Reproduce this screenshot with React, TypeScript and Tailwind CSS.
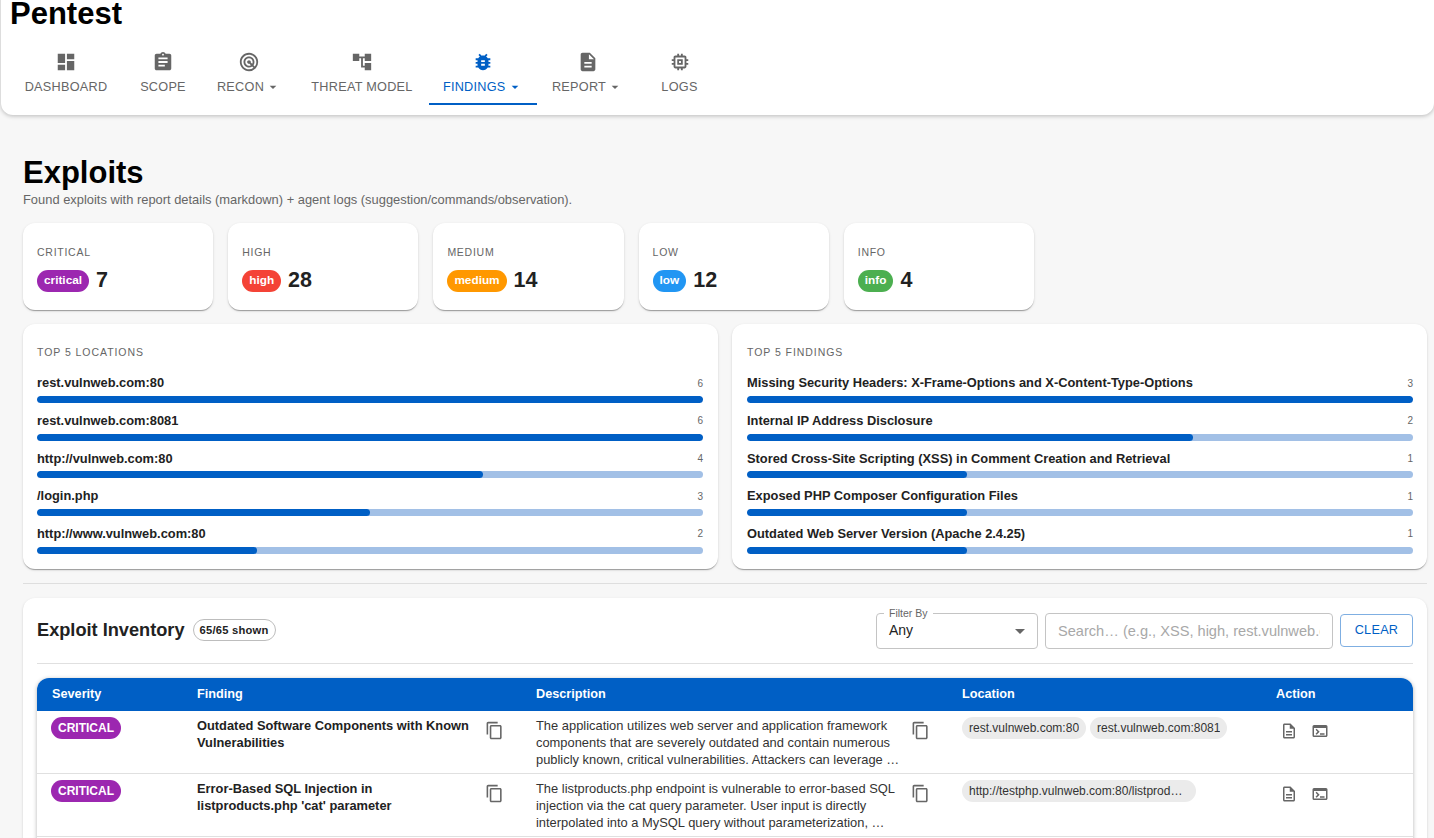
import { useState } from 'react'
import {
  MdAccountTree,
  MdArrowDropDown,
  MdAssignment,
  MdBugReport,
  MdContentCopy,
  MdDashboard,
  MdDescription,
  MdMemory,
  MdOutlineDescription,
  MdOutlineTerminal,
  MdRadar,
} from 'react-icons/md'
import type { IconType } from 'react-icons'

type NavItem = { label: string; icon: IconType; caret?: boolean; active?: boolean; width: string }

const navItems: NavItem[] = [
  { label: 'DASHBOARD', icon: MdDashboard, width: 'w-[114px]' },
  { label: 'SCOPE', icon: MdAssignment, width: 'w-[80px]' },
  { label: 'RECON', icon: MdRadar, caret: true, width: 'w-[92px]' },
  { label: 'THREAT MODEL', icon: MdAccountTree, width: 'w-[134px]' },
  { label: 'FINDINGS', icon: MdBugReport, caret: true, active: true, width: 'w-[107.5px]' },
  { label: 'REPORT', icon: MdDescription, caret: true, width: 'w-[102px]' },
  { label: 'LOGS', icon: MdMemory, width: 'w-[82px]' },
]

const severities = [
  { title: 'CRITICAL', label: 'critical', count: 7, color: 'bg-[#9c27b0]' },
  { title: 'HIGH', label: 'high', count: 28, color: 'bg-[#f44336]' },
  { title: 'MEDIUM', label: 'medium', count: 14, color: 'bg-[#ff9800]' },
  { title: 'LOW', label: 'low', count: 12, color: 'bg-[#2196f3]' },
  { title: 'INFO', label: 'info', count: 4, color: 'bg-[#4caf50]' },
]

const topLocations = [
  { name: 'rest.vulnweb.com:80', count: 6, pct: 100 },
  { name: 'rest.vulnweb.com:8081', count: 6, pct: 100 },
  { name: 'http://vulnweb.com:80', count: 4, pct: 67 },
  { name: '/login.php', count: 3, pct: 50 },
  { name: 'http://www.vulnweb.com:80', count: 2, pct: 33 },
]

const topFindings = [
  { name: 'Missing Security Headers: X-Frame-Options and X-Content-Type-Options', count: 3, pct: 100 },
  { name: 'Internal IP Address Disclosure', count: 2, pct: 67 },
  { name: 'Stored Cross-Site Scripting (XSS) in Comment Creation and Retrieval', count: 1, pct: 33 },
  { name: 'Exposed PHP Composer Configuration Files', count: 1, pct: 33 },
  { name: 'Outdated Web Server Version (Apache 2.4.25)', count: 1, pct: 33 },
]

const rows = [
  {
    finding: 'Outdated Software Components with Known Vulnerabilities',
    description:
      'The application utilizes web server and application framework components that are severely outdated and contain numerous publicly known, critical vulnerabilities. Attackers can leverage …',
    locations: ['rest.vulnweb.com:80', 'rest.vulnweb.com:8081'],
  },
  {
    finding: "Error-Based SQL Injection in listproducts.php 'cat' parameter",
    description:
      'The listproducts.php endpoint is vulnerable to error-based SQL injection via the cat query parameter. User input is directly interpolated into a MySQL query without parameterization, …',
    locations: ['http://testphp.vulnweb.com:80/listproducts.php?cat=1'],
  },
]

const cardShadow =
  'shadow-[0_2px_1px_-1px_rgba(0,0,0,0.2),0_1px_1px_0_rgba(0,0,0,0.14),0_1px_3px_0_rgba(0,0,0,0.12)]'

function TopCard({
  title,
  items,
  padding,
}: {
  title: string
  items: typeof topLocations
  padding: string
}) {
  return (
    <div className={`h-[245px] flex-1 rounded-xl bg-white pt-[21px] ${padding} ${cardShadow}`}>
      <div className="text-[10.5px] leading-[14px] tracking-[0.09em] text-[#666]">{title}</div>
      <div className="mt-[16px] flex flex-col gap-[9.7px]">
        {items.map((item) => (
          <div key={item.name}>
            <div className="flex h-[16px] items-center justify-between">
              <span className="text-[12.85px] font-bold text-[#222]">{item.name}</span>
              <span className="text-[10px] text-[#666]">{item.count}</span>
            </div>
            <div className="mt-[5px] h-[7px] overflow-hidden rounded-full bg-[#a2c0e6]">
              <div className="h-full rounded-full bg-[#005fc5]" style={{ width: `${item.pct}%` }} />
            </div>
          </div>
        ))}
      </div>
    </div>
  )
}

export default function App() {
  const [query, setQuery] = useState('')

  return (
    <div className="h-[838px] overflow-hidden bg-[#f7f7f7] font-['Liberation_Sans',Arial,sans-serif]">
      <header className="-mt-[7px] ml-px h-[122px] rounded-b-xl bg-white pt-[2px] shadow-[0_1px_4px_rgba(0,0,0,0.25)]">
        <h1 className="pl-[9px] text-[31px] leading-[38px] font-bold text-black">Pentest</h1>
        <nav className="mt-[18px] flex pl-2" aria-label="Main">
          {navItems.map((item) => {
            const Icon = item.icon
            return (
              <div
                key={item.label}
                className={`flex h-[54px] flex-col items-center border-b-2 ${item.width} ${
                  item.active ? 'border-[#005fc5] text-[#005fc5]' : 'border-transparent text-[#666]'
                }`}
              >
                <Icon className="size-[22px] shrink-0" aria-hidden />
                <div className="mt-[6px] flex items-center text-[12.7px] leading-[16px] tracking-[0.02em]">
                  {item.label}
                  {item.caret && <MdArrowDropDown className="ml-px size-[16px]" aria-hidden />}
                </div>
              </div>
            )
          })}
        </nav>
      </header>

      <main className="pl-[23px] pr-[7px] pt-[40px]">
        <h2 className="text-[31px] leading-[36px] font-bold text-black">Exploits</h2>
        <p className="text-[12.9px] leading-[18px] text-[#666]">
          Found exploits with report details (markdown) + agent logs (suggestion/commands/observation).
        </p>

        <div className="mt-[14px] flex gap-[15px]">
          {severities.map((s) => (
            <div
              key={s.title}
              className={`h-[87px] w-[190.2px] rounded-xl bg-white px-3.5 pt-[22px] ${cardShadow}`}
            >
              <div className="text-[10.5px] leading-[14px] tracking-[0.07em] text-[#666]">{s.title}</div>
              <div className="mt-[10px] flex items-center gap-[7px]">
                <span
                  className={`flex h-[22px] items-center rounded-full px-[7px] text-[11.8px] font-bold text-white ${s.color}`}
                >
                  {s.label}
                </span>
                <span className="pb-[2px] text-[21.5px] leading-[22px] font-bold text-[#222]">{s.count}</span>
              </div>
            </div>
          ))}
        </div>

        <div className="mt-[14px] flex gap-[14px]">
          <TopCard title="TOP 5 LOCATIONS" items={topLocations} padding="pl-[14px] pr-[15px]" />
          <TopCard title="TOP 5 FINDINGS" items={topFindings} padding="pl-[15px] pr-[14px]" />
        </div>

        <hr className="mt-[14px] border-t border-[#dedede]" />

        <section className={`mt-[14px] h-[300px] rounded-xl bg-white px-3.5 ${cardShadow}`}>
          <div className="flex h-[66px] items-center justify-between border-b border-[#e0e0e0]">
            <div className="flex items-center gap-2">
              <span className="text-[18.2px] font-bold text-[#222]">Exploit Inventory</span>
              <span className="flex h-[22px] items-center rounded-full border border-[#bdbdbd] px-[6px] text-[11.2px] font-bold tracking-[0.02em] text-[#222]">
                65/65 shown
              </span>
            </div>
            <div className="flex items-center gap-[7px]">
              <div className="relative flex h-[36px] w-[162px] items-center justify-between rounded border border-[#c4c4c4] pl-[12px] pr-[5px] text-[14px] text-[#222]">
                <span className="absolute -top-[7px] left-[7px] bg-white px-[5px] text-[10.5px] leading-[12px] text-[#666]">
                  Filter By
                </span>
                Any
                <MdArrowDropDown className="size-[24px] text-[#666]" aria-hidden />
              </div>
              <input
                value={query}
                onChange={(e) => setQuery(e.target.value)}
                placeholder="Search… (e.g., XSS, high, rest.vulnweb.com)"
                className="h-[36px] w-[288px] rounded border border-[#c4c4c4] px-[12px] text-[14.6px] text-[#222] outline-none placeholder:text-[#a8a8a8]"
              />
              <button
                type="button"
                className="h-[33px] w-[73px] rounded border border-[#7fafe2] text-[12.7px] tracking-[0.02em] text-[#005fc5]"
              >
                CLEAR
              </button>
            </div>
          </div>

          <div className="mt-[14px] h-[200px] overflow-hidden rounded-t-xl bg-white shadow-[0_1px_4px_rgba(0,0,0,0.3)]">
            <table className="w-full table-fixed border-collapse">
              <colgroup>
                <col className="w-[145px]" />
                <col className="w-[339px]" />
                <col className="w-[426px]" />
                <col className="w-[314px]" />
                <col />
              </colgroup>
              <thead>
                <tr className="h-[33px] bg-[#005fc5] text-left text-[12.7px] font-bold text-white">
                  <th className="pl-[15px]">Severity</th>
                  <th className="pl-[15px]">Finding</th>
                  <th className="pl-[15px]">Description</th>
                  <th className="pl-[15px]">Location</th>
                  <th className="pl-[15px]">Action</th>
                </tr>
              </thead>
              <tbody>
                {rows.map((row) => (
                  <tr key={row.finding} className="h-[62.5px] border-b border-[#e0e0e0] align-top">
                    <td className="pl-[14px] pt-[6px]">
                      <span className="flex h-[22px] w-fit items-center rounded-full bg-[#9c27b0] px-[7px] text-[12px] font-bold text-white">
                        CRITICAL
                      </span>
                    </td>
                    <td className="pl-[15px] pt-[6px]">
                      <div className="flex justify-between pr-[17px]">
                        <span className="w-[275px] text-[12.85px] leading-[17px] font-bold text-[#222]">
                          {row.finding}
                        </span>
                        <MdContentCopy className="mt-[4px] size-[19px] shrink-0 text-[#666]" aria-hidden />
                      </div>
                    </td>
                    <td className="pl-[15px] pt-[6px]">
                      <div className="flex justify-between pr-[17px]">
                        <span className="w-[366px] text-[12.9px] leading-[17px] text-[#333]">
                          {row.description}
                        </span>
                        <MdContentCopy className="mt-[4px] size-[19px] shrink-0 text-[#666]" aria-hidden />
                      </div>
                    </td>
                    <td className="pl-[15px] pt-[6px]">
                      <div className="flex gap-[4px]">
                        {row.locations.map((loc) => (
                          <span
                            key={loc}
                            className="flex h-[22px] max-w-[234px] items-center rounded-full bg-[#ebebeb] px-[7px] text-[12px] text-[#333]"
                          >
                            <span className="truncate">{loc}</span>
                          </span>
                        ))}
                      </div>
                    </td>
                    <td className="pl-[19px] pt-[11px]">
                      <div className="flex gap-[13px] text-[#666]">
                        <MdOutlineDescription className="size-[18px]" aria-hidden />
                        <MdOutlineTerminal className="size-[18px]" aria-hidden />
                      </div>
                    </td>
                  </tr>
                ))}
              </tbody>
            </table>
          </div>
        </section>
      </main>
    </div>
  )
}
